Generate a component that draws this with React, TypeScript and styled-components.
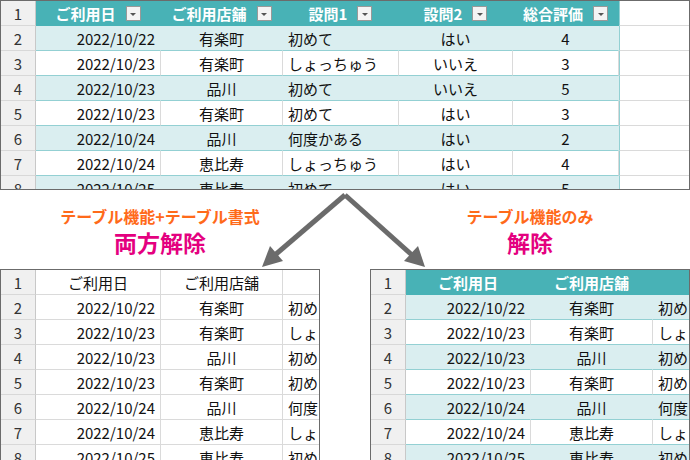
import styled, { createGlobalStyle } from 'styled-components';

const GlobalStyle = createGlobalStyle`
	html, body { margin: 0; padding: 0; background: #fff; }
	body { width: 690px; height: 460px; overflow: hidden; font-family: "Noto Sans CJK JP", "Noto Sans", sans-serif; }
`;

type Row = [string, string, string, string, string];

const rows: Row[] = [
	['2022/10/22', '有楽町', '初めて', 'はい', '4'],
	['2022/10/23', '有楽町', 'しょっちゅう', 'いいえ', '3'],
	['2022/10/23', '品川', '初めて', 'いいえ', '5'],
	['2022/10/23', '有楽町', '初めて', 'はい', '3'],
	['2022/10/24', '品川', '何度かある', 'はい', '2'],
	['2022/10/24', '恵比寿', 'しょっちゅう', 'はい', '4'],
	['2022/10/25', '恵比寿', '初めて', 'はい', '5'],
];

const headers = ['ご利用日', 'ご利用店舗', '設問1', '設問2', '総合評価'];
const align = ['right', 'center', 'left', 'center', 'center'];

const Page = styled.div`
	position: relative;
	width: 690px;
	height: 460px;
	overflow: hidden;
`;

const Sheet = styled.div<{ $cols: string; $height: number }>`
	display: grid;
	grid-template-columns: ${p => p.$cols};
	grid-auto-rows: 25px;
	height: ${p => p.$height}px;
	overflow: hidden;
	border: 1px solid #6b6b6b;
	box-sizing: border-box;
	font-size: 15px;
	color: #111;
`;

const RowNum = styled.div`
	background: #f0f0f0;
	color: #333;
	border-right: 1px solid #c8c8c8;
	border-bottom: 1px solid #d8d8d8;
	display: flex;
	align-items: center;
	justify-content: center;
`;

const Cell = styled.div<{ $band?: boolean; $head?: boolean; $align?: string; $plain?: boolean }>`
	background: ${p => (p.$head ? '#48b2b6' : p.$band ? '#daeef0' : '#fff')};
	color: ${p => (p.$head ? '#fff' : '#111')};
	font-weight: ${p => (p.$head ? 700 : 400)};
	border-right: 1px solid ${p => (p.$head || p.$band ? 'transparent' : '#dadada')};
	border-bottom: 1px solid ${p => (p.$plain ? '#dadada' : p.$head ? '#48b2b6' : '#93d0d3')};
	display: flex;
	align-items: center;
	justify-content: ${p => (p.$align === 'right' ? 'flex-end' : p.$align === 'left' ? 'flex-start' : 'center')};
	padding: 0 5px;
	white-space: nowrap;
	overflow: hidden;
`;

const Blank = styled.div`
	border-bottom: 1px solid #dadada;
	border-left: 1px solid #93d0d3;
`;

const Filter = styled.span`
	width: 15px;
	height: 15px;
	margin-left: 10px;
	background: #f4f4f4;
	border: 1px solid #999;
	box-sizing: border-box;
	display: inline-flex;
	align-items: center;
	justify-content: center;
	&::after {
		content: '';
		border-left: 3px solid transparent;
		border-right: 3px solid transparent;
		border-top: 3px solid #555;
		margin-top: 2px;
	}
`;

const Bottom = styled.div`
	display: grid;
	grid-template-columns: 320px 320px;
	column-gap: 50px;
	margin-top: 10px;
`;

const Column = styled.div`
	display: flex;
	flex-direction: column;
	align-items: stretch;
`;

const Caption = styled.div`
	text-align: center;
	color: #ff6a1a;
	font-weight: 700;
	font-size: 16px;
	line-height: 22px;
	margin-top: 5px;
`;

const Title = styled.div`
	text-align: center;
	color: #e4007f;
	font-weight: 700;
	font-size: 23px;
	line-height: 30px;
	margin-bottom: 12px;
`;

const Arrows = styled.svg`
	position: absolute;
	left: 0;
	top: 0;
	pointer-events: none;
`;

const TopTable = () => (
	<Sheet $cols="35px 125px 122px 116px 114px 106px 72px" $height={190}>
		<RowNum>1</RowNum>
		{headers.map(h => (
			<Cell key={h} $head $align="center">{h}<Filter /></Cell>
		))}
		<Blank />
		{rows.map((r, i) => (
			<>
				<RowNum key={'n' + i}>{i + 2}</RowNum>
				{r.map((v, j) => (
					<Cell key={i + '-' + j} $band={i % 2 === 0} $align={align[j]}>{v}</Cell>
				))}
				<Blank key={'b' + i} />
			</>
		))}
	</Sheet>
);

const SmallTable = ({ styledHead }: { styledHead: boolean }) => (
	<Sheet $cols="35px 125px 122px 116px" $height={200} style={{ borderBottom: 'none' }}>
		<RowNum>1</RowNum>
		{headers.slice(0, 3).map((h, j) => (
			<Cell key={h} $head={styledHead} $plain={!styledHead} $align="center">{j < 2 ? h : ''}</Cell>
		))}
		{rows.map((r, i) => (
			<>
				<RowNum key={'n' + i}>{i + 2}</RowNum>
				{r.slice(0, 3).map((v, j) => (
					<Cell key={i + '-' + j} $band={styledHead && i % 2 === 0} $plain={!styledHead} $align={align[j]}>{v}</Cell>
				))}
			</>
		))}
	</Sheet>
);

export default function App() {
	return (
		<Page>
			<GlobalStyle />
			<TopTable />
			<Bottom>
				<Column>
					<Caption>テーブル機能+テーブル書式</Caption>
					<Title>両方解除</Title>
					<SmallTable styledHead={false} />
				</Column>
				<Column>
					<Caption>テーブル機能のみ</Caption>
					<Title>解除</Title>
					<SmallTable styledHead />
				</Column>
			</Bottom>
			<Arrows width="690" height="460">
				<g stroke="#6b6b6b" strokeWidth="5" fill="none">
					<line x1="345" y1="195" x2="275" y2="255" />
					<line x1="345" y1="195" x2="412" y2="255" />
				</g>
				<polygon points="262,267 270,246 283,261" fill="#6b6b6b" />
				<polygon points="425,267 404,261 418,246" fill="#6b6b6b" />
			</Arrows>
		</Page>
	);
}
